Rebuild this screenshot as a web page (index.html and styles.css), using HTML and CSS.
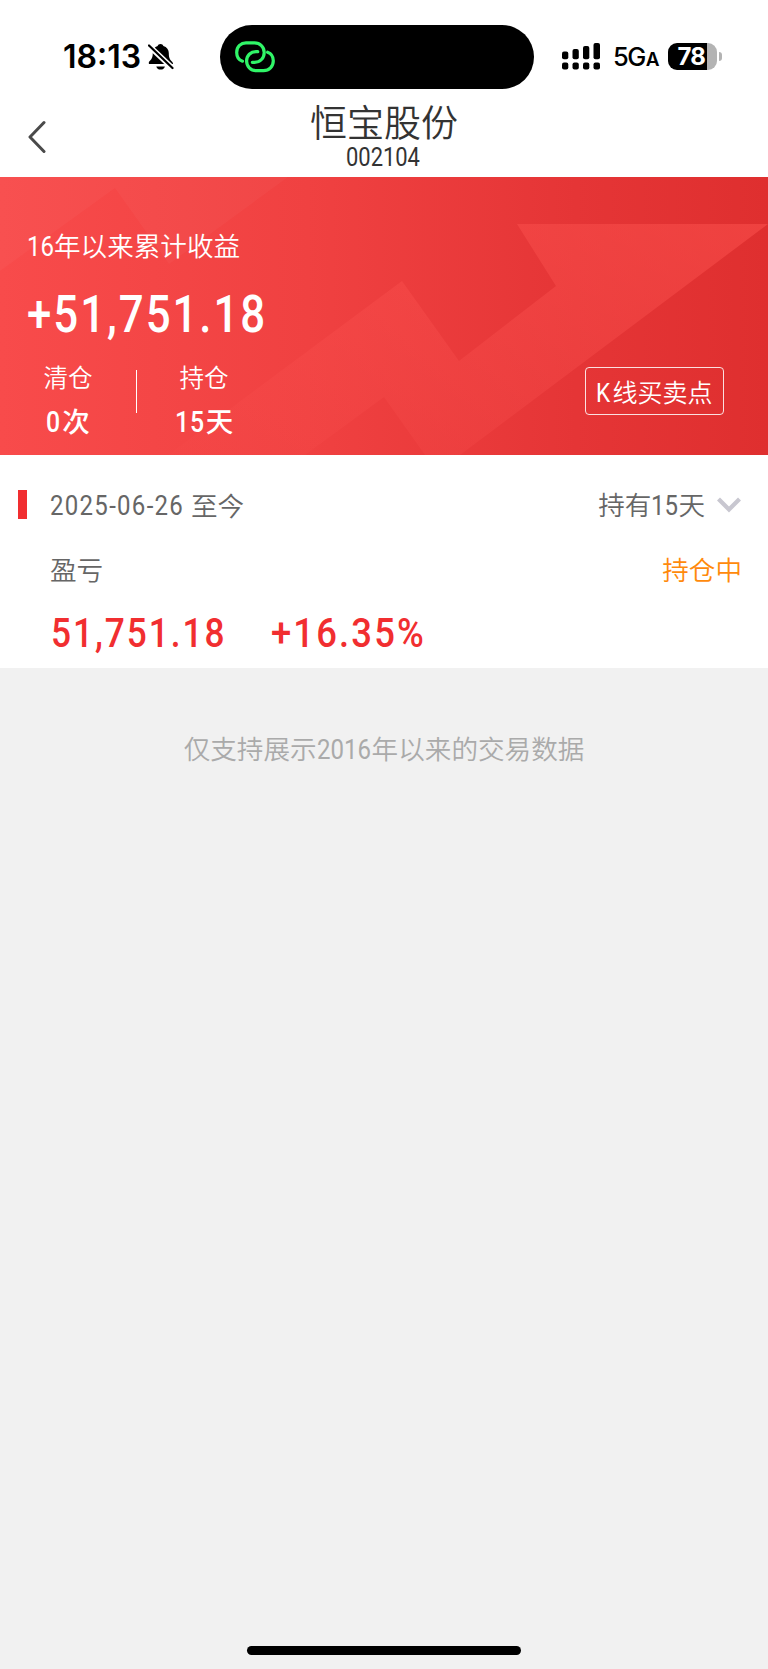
FILE: index.html
```html
<!DOCTYPE html>
<html lang="zh-CN">
<head>
  <meta charset="UTF-8">
  <meta name="viewport" content="width=device-width, initial-scale=1.0">
  <title>恒宝股份</title>
  <link rel="stylesheet" href="styles.css">
</head>
<body>
  <div class="status-bar">
    <span class="time">18:13</span>
    <svg class="bell" width="26" height="28" viewBox="0 0 26 28">
      <path d="M12.5 1c1.5 0 2.500.8 2.900 1.900 3.500 1 5.400 3.800 5.400 7.200 0 5 1 6.500 3 8.300.9.800 1.200 1.400 1.200 2.600H1c-.6-1.700.1-2.700 1.200-3.600 2-1.800 2.500-3.600 2.600-7.300 0-3.400 1.600-6.100 4.800-7.200C10 1.800 11 1 12.500 1z"/>
      <path d="M8.300 23.500h8.600c-.4 2-2 3.100-4.300 3.100s-3.900-1.100-4.300-3.100z"/>
      <path d="M0 2l25 23.500" stroke="#fff" stroke-width="5.500"/>
      <path d="M1 2.500l23.500 22.500" stroke="#000" stroke-width="2.200" stroke-linecap="round"/>
    </svg>
    <div class="island">
      <svg width="40" height="32" viewBox="0 0 40 32" fill="none" stroke="#30f568" stroke-width="3.200" stroke-linecap="round">
        <path d="M7.500 20.200C4 19 1.700 15.600 1.700 11.400 1.700 5.600 6 1.900 11 1.900h8.500c5.500 0 9.700 4.200 9.700 9.600 0 5.600-4 9.800-9.600 9.800h-2.300"/>
        <path d="M32.600 11.200c3.600 1.300 5.700 4.600 5.700 8.600 0 5.600-4.100 9.800-9.800 9.800h-7.300c-5.600 0-9.600-4.300-9.600-9.600 0-5.600 4-9.300 9.600-9.300h1.600"/>
      </svg>
    </div>
    <svg class="signal" width="39" height="28" viewBox="0 0 39 28">
      <rect x="0" y="8.500" width="6.300" height="7.700" rx="2"/>
      <rect x="10.500" y="6" width="6.300" height="10.200" rx="2"/>
      <rect x="21" y="3" width="6.300" height="13.200" rx="2"/>
      <rect x="31.500" y="0" width="6.500" height="16.200" rx="2"/>
      <rect x="0" y="19.500" width="6.300" height="7" rx="2"/>
      <rect x="10.500" y="19.500" width="6.300" height="7" rx="2"/>
      <rect x="21" y="19.500" width="6.300" height="7" rx="2"/>
      <rect x="31.500" y="19.500" width="6.500" height="7" rx="2"/>
    </svg>
    <span class="network">5G<small>A</small></span>
    <div class="battery">78</div>
    <div class="battery-tip"></div>
  </div>

  <header class="header">
    <svg class="back" width="20" height="34" viewBox="0 0 20 34" fill="none" stroke="#4a4a4a" stroke-width="3" stroke-linecap="round" stroke-linejoin="round">
      <path d="M16 2.500L2 17l14 14.500"/>
    </svg>
    <div class="title">
      <h1>恒宝股份</h1>
      <span class="num code">002104</span>
    </div>
  </header>

  <section class="hero">
    <svg class="hero-bg" width="768" height="278" viewBox="0 0 768 278" preserveAspectRatio="none">
      <defs>
        <linearGradient id="arrow" x1="0" y1="1" x2="1" y2="0">
          <stop offset="0" stop-color="#ff5a58" stop-opacity=".05"/>
          <stop offset="1" stop-color="#ff5450" stop-opacity=".5"/>
        </linearGradient>
      </defs>
      <path fill="#fff" fill-opacity=".03" d="M0 0H288L169 87 115 11 0 94z"/>
      <path fill="url(#arrow)" d="M168 278L402 104 459 184 556 109 517 47H768L460 278H425L384 220 305 278z"/>
    </svg>
    <div class="hero-body">
      <div class="hero-label"><span class="num n16">16</span>年以来累计收益</div>
      <div class="hero-total"><span class="num">+51,751.18</span></div>
      <div class="stats">
        <div class="stat">
          <span class="stat-name">清仓</span>
          <span class="stat-value"><span class="num n0">0</span>次</span>
        </div>
        <div class="divider"></div>
        <div class="stat">
          <span class="stat-name">持仓</span>
          <span class="stat-value"><span class="num n15">15</span>天</span>
        </div>
        <button class="kline"><span class="num nk">K</span>线买卖点</button>
      </div>
    </div>
  </section>

  <section class="record">
    <div class="row period">
      <i class="mark"></i>
      <span class="num date">2025-06-26</span>
      <span class="until">至今</span>
      <span class="held">持有<span class="num days">15</span>天</span>
      <svg width="24" height="16" viewBox="0 0 24 16" fill="none" stroke="#c8c7d0" stroke-width="4.200">
        <path d="M1.500 2L12 12.500 22.500 2"/>
      </svg>
    </div>
    <div class="row profit">
      <span>盈亏</span>
      <span class="holding">持仓中</span>
    </div>
    <div class="row amounts">
      <span class="num amount">51,751.18</span>
      <span class="num rate">+16.35%</span>
    </div>
  </section>

  <p class="note">仅支持展示<span class="num n2016">2016</span>年以来的交易数据</p>
  <div class="home-bar"></div>
</body>
</html>
```
FILE: styles.css
```css
* {
  box-sizing: border-box;
}
body {
  margin: 0;
  width: 768px;
  height: 1669px;
  display: flex;
  flex-direction: column;
  overflow: hidden;
  background: #f1f1f1;
  color: #666;
  font-family: "Noto Sans CJK SC", sans-serif;
  font-weight: 350;
  font-size: 26.6px;
  line-height: 36px;
}
svg {
  display: block;
  flex: none;
}
/* narrow figures, box width is set per item */
.num {
  display: inline-block;
  flex: none;
  font-family: Roboto, "Noto Sans CJK SC", sans-serif;
  font-size: 1.05em;
  font-weight: 400;
  white-space: nowrap;
  transform: scaleX(.86);
  transform-origin: left center;
}

/* status bar */
.status-bar {
  display: flex;
  align-items: center;
  height: 100px;
  padding: 13px 0 0 63px;
  background: #fff;
  color: #000;
}
.time {
  width: 85px;
  padding-top: 1px;
  font: 600 32px/36px Inter, sans-serif;
}
.bell {
  width: 26px;
}
.island {
  width: 314px;
  height: 64px;
  margin-left: 46px;
  padding: 16px 0 0 15px;
  border-radius: 32px;
  background: #000;
}
.signal {
  margin-left: 28px;
}
.network {
  width: 45px;
  margin-left: 12px;
  padding-top: 3px;
  font: 500 25.500px/30px Inter, sans-serif;
  letter-spacing: -1.500px;
  white-space: nowrap;
}
.network small {
  margin-left: 1px;
  font-size: 19px;
  font-weight: 600;
}
.battery {
  width: 49px;
  height: 27px;
  margin-left: 9.500px;
  padding-left: 10px;
  border-radius: 9px;
  background: linear-gradient(90deg, #000 39px, #b3b3b3 39px);
  color: #fff;
  font: 700 24px/27px Inter, sans-serif;
  letter-spacing: -.8px;
}
.battery-tip {
  width: 3px;
  height: 9px;
  margin-left: 2px;
  border-radius: 0 4px 4px 0;
  background: #b3b3b3;
}

/* header */
.header {
  display: flex;
  height: 77px;
  padding-left: 28px;
  background: #fff;
  color: #333;
}
.back {
  margin-top: 20px;
}
.title {
  display: flex;
  flex-direction: column;
  align-items: center;
  width: 672px;
}
.title h1 {
  margin: 0;
  font-size: 37px;
  font-weight: 350;
  line-height: 42px;
}
.code {
  width: 77px;
  margin-top: 2px;
  font-size: 25.500px;
  line-height: 26px;
}

/* hero */
.hero {
  position: relative;
  height: 278px;
  background: linear-gradient(90deg, #f84b4b, #f04141 40%, #e53536 75%, #df2f2f);
  color: #fff;
}
.hero-bg {
  position: absolute;
  top: 0;
  left: 0;
}
.hero-body {
  position: relative;
  padding: 50px 0 0 27px;
}
.n16 {
  width: 27px;
}
.hero-total {
  height: 72px;
  padding-top: 10px;
  font-size: 48.500px;
  line-height: 72px;
}
.hero-total .num {
  font-weight: 500;
  letter-spacing: 2.300px;
}
.stats {
  display: flex;
  margin-top: 22px;
}
.stat {
  display: flex;
  flex-direction: column;
  align-items: center;
  width: 82px;
}
.stat-name {
  font-size: 24.500px;
}
.stat-value {
  margin-top: 7px;
  font-size: 27.500px;
  font-weight: 500;
}
.stat-value .num {
  font-weight: 500;
}
.n0 {
  width: 16px;
}
.n15 {
  width: 31px;
  letter-spacing: 1px;
}
.divider {
  width: 1px;
  height: 43px;
  margin: 11px 26px 0 27px;
  background: #fff;
}
.kline {
  width: 139px;
  height: 48px;
  margin: 8px 0 0 340px;
  padding: 2px 0 0;
  border: 1px solid rgba(255, 255, 255, .85);
  border-radius: 4px;
  background: none;
  color: #fff;
  font: inherit;
  font-size: 25px;
}
.nk {
  width: 16px;
}

/* record */
.record {
  height: 213px;
  background: #fff;
}
.row {
  display: flex;
  align-items: center;
}
.period {
  height: 64px;
  padding: 35px 27px 0 18px;
}
.mark {
  width: 9px;
  height: 29px;
  margin-right: 23px;
  background: #f12e30;
}
.date {
  width: 141px;
  padding-top: 2px;
  letter-spacing: 1.500px;
}
.held {
  margin: 0 12px 0 auto;
}
.days {
  width: 27px;
}
.profit {
  justify-content: space-between;
  height: 66px;
  padding: 33px 26px 0 50px;
}
.holding {
  color: #ff8a0c;
}
.amounts {
  height: 80px;
  padding: 15px 0 0 51px;
  color: #f12e30;
  font-size: 39px;
}
.amounts .num {
  font-weight: 500;
  letter-spacing: 2.300px;
}
.amount {
  width: 220px;
}
.amounts .rate {
  letter-spacing: 2.400px;
  transform: scaleX(.89);
}

/* note */
.note {
  margin: 62px 0 0;
  color: #aaa;
  text-align: center;
}
.n2016 {
  width: 55px;
}
.home-bar {
  width: 274px;
  height: 9px;
  margin: auto auto 14px;
  border-radius: 5px;
  background: #000;
}
```
